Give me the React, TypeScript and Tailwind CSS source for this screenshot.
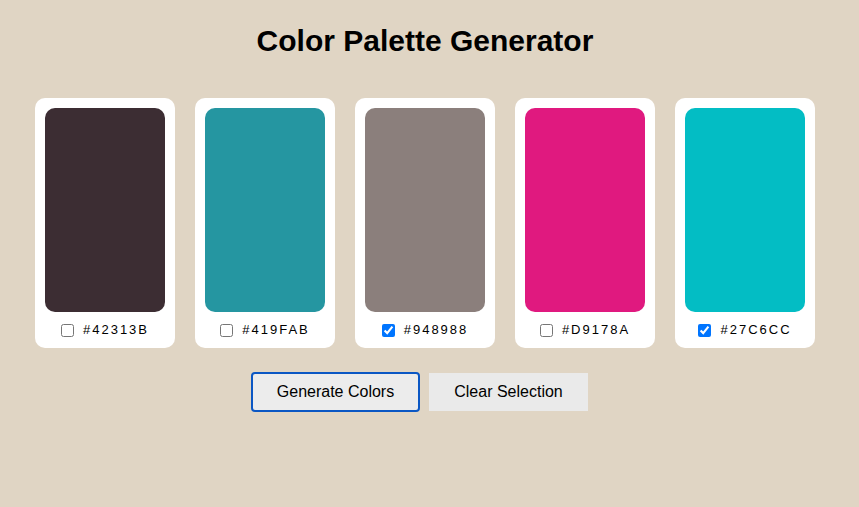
import React from "react";

const swatches = [
  { bg: "bg-[#3c2d33]", label: "#42313B", checked: false },
  { bg: "bg-[#2596a1]", label: "#419FAB", checked: false },
  { bg: "bg-[#8b7f7c]", label: "#948988", checked: true },
  { bg: "bg-[#e0197f]", label: "#D9178A", checked: false },
  { bg: "bg-[#03bdc4]", label: "#27C6CC", checked: true },
];

export default function App() {
  return (
    <div className="min-h-screen w-full bg-[#e0d5c4] text-black" style={{ fontFamily: '"Liberation Sans", Arial, sans-serif' }}>
      <div className="w-[850px] flex flex-col items-center">
        <h1 className="mt-[24px] text-[30px] leading-[34px] font-bold">Color Palette Generator</h1>
        <div className="mt-[40px] flex gap-[20px]">
          {swatches.map((s) => (
            <div key={s.label} className="bg-white rounded-[10px] p-[10px] w-[140px] flex flex-col items-center">
              <div className={`${s.bg} w-[120px] h-[204px] rounded-[10px]`} />
              <label className="mt-[10px] h-[16px] flex items-center justify-center gap-[9px]">
                <input type="checkbox" defaultChecked={s.checked} className="m-0 w-[13px] h-[13px]" />
                <span className="text-[13px] leading-[16px] tracking-[2px]">{s.label}</span>
              </label>
            </div>
          ))}
        </div>
        <div className="mt-[24px] flex items-center gap-[9px] pr-[11px]">
          <button className="w-[169px] h-[40px] border-2 border-[#0b57c4] rounded-[4px] bg-[#ececec] text-[16px]">Generate Colors</button>
          <button className="w-[159px] h-[38px] bg-[#eaeaea] text-[16px]">Clear Selection</button>
        </div>
      </div>
    </div>
  );
}
